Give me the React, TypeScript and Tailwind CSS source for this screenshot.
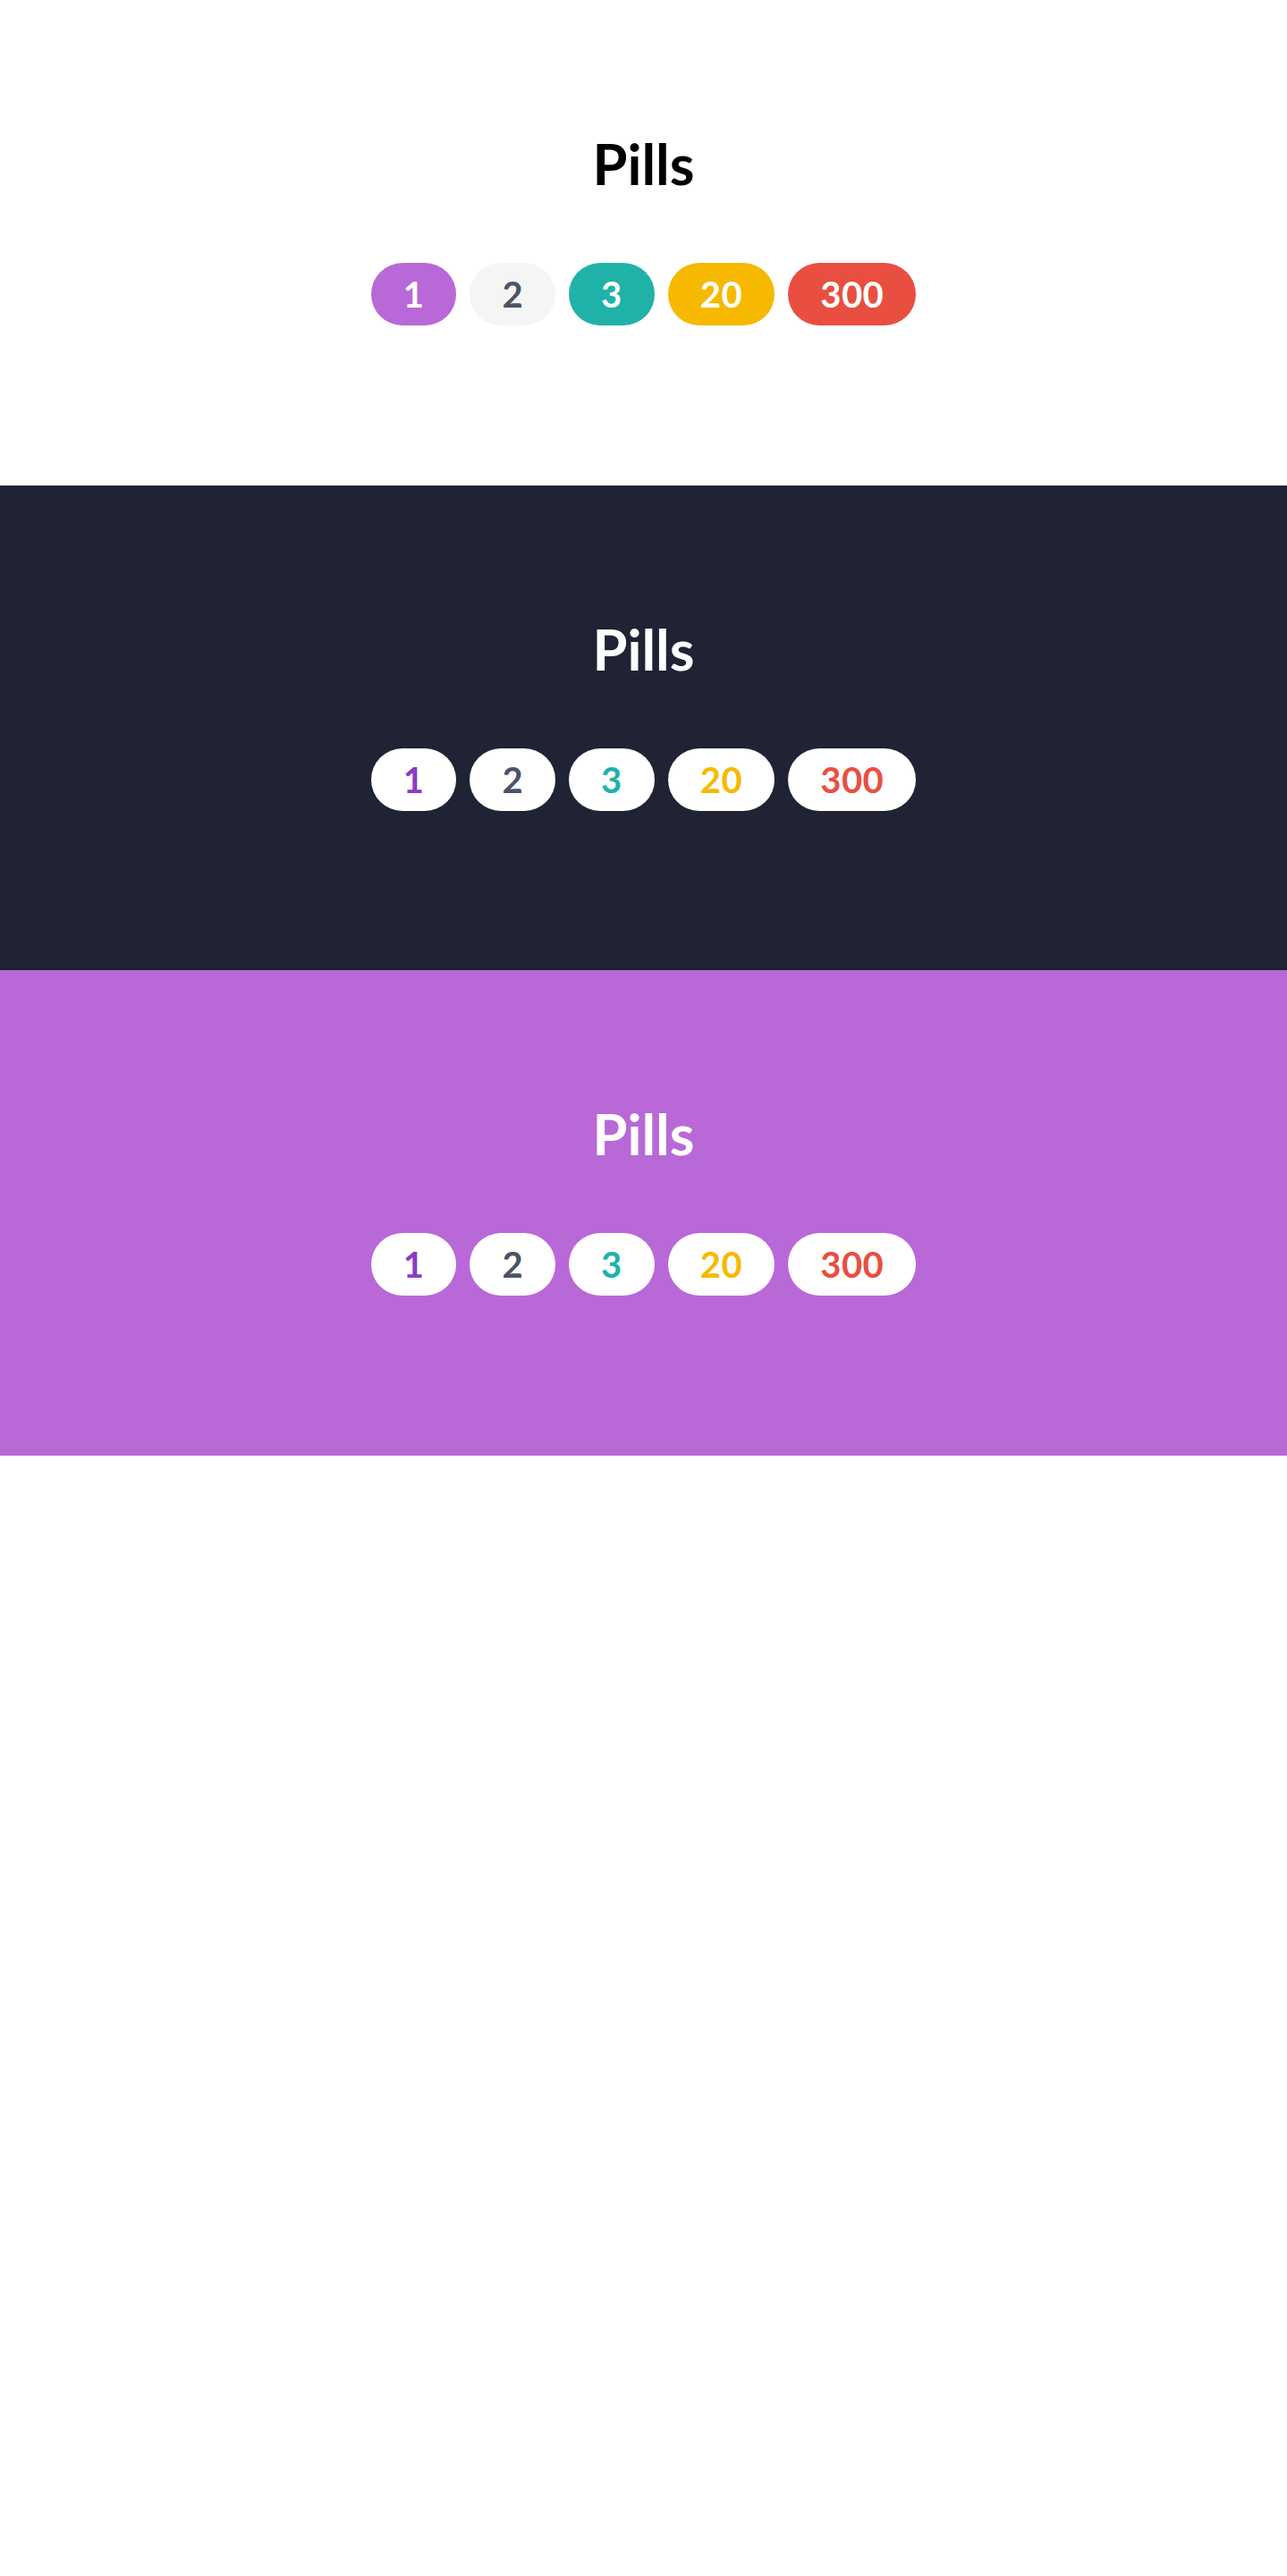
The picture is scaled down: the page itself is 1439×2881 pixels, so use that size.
import React from "react";

type Variant = "light" | "dark" | "purple";

const solid = [
  { label: "1", cls: "bg-[#b968d8] text-white" },
  { label: "2", cls: "bg-[#f5f5f5] text-[#4a5466]" },
  { label: "3", cls: "bg-[#20b2a9] text-white" },
  { label: "20", cls: "bg-[#f6b900] text-white" },
  { label: "300", cls: "bg-[#e84f41] text-white" },
];

const outline = [
  { label: "1", cls: "bg-white text-[#8a3cc6]" },
  { label: "2", cls: "bg-white text-[#4a5466]" },
  { label: "3", cls: "bg-white text-[#20b2a9]" },
  { label: "20", cls: "bg-white text-[#f6b900]" },
  { label: "300", cls: "bg-white text-[#e84f41]" },
];

function Section({ variant, h }: { variant: Variant; h: string }) {
  const bg =
    variant === "light"
      ? "bg-white text-black"
      : variant === "dark"
      ? "bg-[#1f2333] text-white"
      : "bg-[#b968d8] text-white";
  const pills = variant === "light" ? solid : outline;
  return (
    <section className={`${bg} ${h} flex flex-col items-center pt-[151px]`}>
      <h2 className="text-[63px] leading-[63px] font-bold">Pills</h2>
      <div className="mt-[80px] flex gap-[15px]">
        {pills.map((p) => (
          <span
            key={p.label}
            className={`${p.cls} h-[70px] min-w-[95px] px-[36px] rounded-full flex items-center justify-center text-[40px] font-bold leading-none tracking-[0.5px]`}
          >
            {p.label}
          </span>
        ))}
      </div>
    </section>
  );
}

export default function App() {
  return (
    <div className="min-h-[2881px] bg-white" style={{ fontFamily: "Lato, 'Noto Sans', sans-serif" }}>
      <Section variant="light" h="h-[543px]" />
      <Section variant="dark" h="h-[542px]" />
      <Section variant="purple" h="h-[543px]" />
    </div>
  );
}
